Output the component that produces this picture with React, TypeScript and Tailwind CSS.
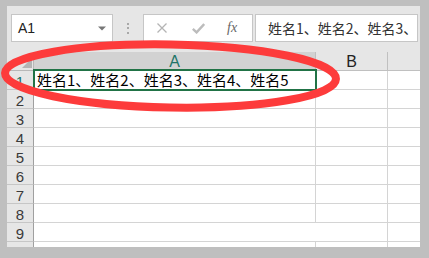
import React from "react";

const cjk = { fontFamily: '"Noto Sans CJK SC", "Noto Sans", sans-serif' };
const sans = { fontFamily: '"Liberation Sans", Arial, sans-serif' };

export default function App() {
  const rows = [1, 2, 3, 4, 5, 6, 7, 8, 9];
  return (
    <div className="relative h-[258px] w-[429px] overflow-hidden bg-[#bfbfbf] pb-[11px] pl-[7px] pr-[9px] pt-[6px]">
      <div className="flex h-full flex-col bg-[#e6e6e6]">
        {/* formula bar */}
        <div className="mt-[8px] flex h-[28px] shrink-0 pl-[4px] pr-[2px]">
          <div className="flex w-[102px] items-center justify-between border border-[#c6c6c6] bg-white pl-[6px] pr-[6px]">
            <span className="text-[14px] leading-none text-[#222]" style={sans}>
              A1
            </span>
            <svg width="8" height="5" viewBox="0 0 8 5">
              <path d="M0 0.5 H8 L4 4.5 Z" fill="#777" />
            </svg>
          </div>
          <div className="flex w-[30px] flex-col items-center justify-center gap-[2.5px]">
            <div className="h-[2px] w-[2px] bg-[#a8a8a8]" />
            <div className="h-[2px] w-[2px] bg-[#a8a8a8]" />
            <div className="h-[2px] w-[2px] bg-[#a8a8a8]" />
          </div>
          <div className="flex w-[110px] items-center border border-[#c6c6c6] bg-white pl-[13px]">
            <svg width="10" height="10" viewBox="0 0 10 10">
              <path d="M0.5 0.5 L9.5 9.5 M9.5 0.5 L0.5 9.5" stroke="#b4b4b4" strokeWidth="1.3" fill="none" />
            </svg>
            <svg className="ml-[25px]" width="13" height="11" viewBox="0 0 13 11">
              <path d="M0.8 5.8 L4.6 9.4 L12.2 1" stroke="#bcbcbc" strokeWidth="2.4" fill="none" />
            </svg>
            <span
              className="ml-[22px] text-[14px] italic leading-none text-[#666]"
              style={{ fontFamily: '"Liberation Serif", "Times New Roman", serif' }}
            >
              fx
            </span>
          </div>
          <div className="ml-[2px] flex min-w-0 flex-1 items-center overflow-hidden whitespace-nowrap border border-[#c6c6c6] bg-white pl-[12px]">
            <span className="text-[14px] leading-none text-[#333]" style={cjk}>
              姓名1、姓名2、姓名3、
            </span>
          </div>
        </div>

        {/* grid */}
        <div className="mt-[10px] grid flex-1 grid-cols-[27px_282px_72px_1fr] auto-rows-[19px] overflow-hidden">
          {/* header row */}
          <div className="flex items-end justify-end border-b border-r border-[#b8b8b8] bg-[#e6e6e6] pb-[2px] pr-[1px]">
            <svg width="10" height="10" viewBox="0 0 10 10">
              <path d="M10 0 V10 H0 Z" fill="#b4b4b4" />
            </svg>
          </div>
          <div
            className="flex items-center justify-center border-b border-r border-[#c0c0c0] bg-[#d2d2d2] pt-[1px] text-[16px] leading-none text-[#1f7468]"
            style={sans}
          >
            A
          </div>
          <div
            className="flex items-center justify-center border-b border-r border-[#c0c0c0] bg-[#e6e6e6] pt-[1px] text-[16px] leading-none text-[#222]"
            style={sans}
          >
            B
          </div>
          <div className="border-b border-[#c0c0c0] bg-[#e6e6e6]" />

          {rows.map((r) => (
            <React.Fragment key={r}>
              <div
                className={`flex items-center justify-center border-b border-r border-[#c6c6c6] border-r-[#a0a0a0] bg-[#e6e6e6] pt-[2px] text-[15px] leading-none ${
                  r === 1 ? "text-[#1f7468]" : "text-[#3a3a3a]"
                }`}
                style={sans}
              >
                {r}
              </div>
              {r === 1 ? (
                <>
                  <div className="relative flex items-end border-b border-r border-[#d4d4d4] bg-white pl-[3px]">
                    <span className="whitespace-nowrap text-[15px] leading-[18px] text-black" style={cjk}>
                      姓名1、姓名2、姓名3、姓名4、姓名5
                    </span>
                    <div className="pointer-events-none absolute -bottom-[2px] -left-[1px] -right-[2px] -top-[2px] border-2 border-[#217346]" />
                  </div>
                  <div className="border-b border-r border-[#d4d4d4] bg-white" />
                </>
              ) : r === 9 ? (
                <div className="col-span-2 border-b border-r border-[#d4d4d4] bg-white" />
              ) : (
                <>
                  <div className="border-b border-r border-[#d4d4d4] bg-white" />
                  <div className="border-b border-r border-[#d4d4d4] bg-white" />
                </>
              )}
              <div className="border-b border-[#d4d4d4] bg-white" />
            </React.Fragment>
          ))}
          <div className="border-r border-[#a0a0a0] bg-[#e6e6e6]" />
          <div className="border-r border-[#d4d4d4] bg-white" />
          <div className="border-r border-[#d4d4d4] bg-white" />
          <div className="bg-white" />
        </div>
      </div>

      {/* red annotation ellipse */}
      <svg className="pointer-events-none absolute left-0 top-0" width="429" height="258" viewBox="0 0 429 258">
        <ellipse
          cx="170.5"
          cy="76"
          rx="165.5"
          ry="31.5"
          transform="rotate(1 170.5 76)"
          fill="none"
          stroke="#fd3b3b"
          strokeWidth="8"
        />
      </svg>
    </div>
  );
}
